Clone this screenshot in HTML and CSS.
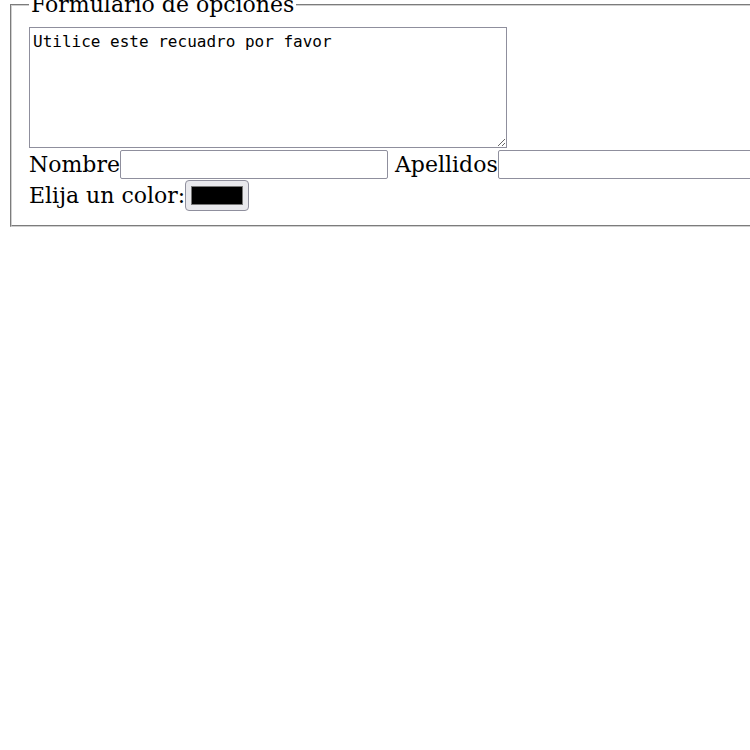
FILE: index.html
```html
<!DOCTYPE html>
<html lang="es">
<head>
<meta charset="utf-8">
<title>Formulario</title>
<link rel="stylesheet" href="styles.css">
</head>
<body>
<form class="form">
  <fieldset class="options">
    <legend class="options-legend">Formulario de opciones</legend>
    <textarea class="note">Utilice este recuadro por favor</textarea>
    <div class="row">
      <label class="lbl" for="nombre">Nombre</label><input class="text-in name-in" id="nombre" type="text"><label class="lbl gap" for="apellidos">Apellidos</label><input class="text-in last-in" id="apellidos" type="text">
    </div>
    <div class="row">
      <label class="lbl" for="color">Elija un color:</label><input class="color-in" id="color" type="color" value="#000000">
    </div>
  </fieldset>
</form>
</body>
</html>
```
FILE: styles.css
```css
html, body {
  margin: 0;
  padding: 0;
  background: #ffffff;
  overflow: hidden;
}
body {
  font-family: "DejaVu Serif", serif;
  font-size: 22px;
  color: #000;
}
.form {
  margin: 0;
}
.options {
  width: 780px;
  margin: -8px 0 0 10px;
  padding: 10px 17px 14px 17px;
  border: 2px groove #d0d0d0;
  min-width: 0;
}
.options-legend {
  font-size: 22px;
  padding: 0 2px;
  line-height: 25px;
}
.note {
  display: block;
  box-sizing: border-box;
  width: 478px;
  height: 121px;
  margin: 0;
  padding: 4px 3px 2px 3px;
  font-family: "DejaVu Sans Mono", monospace;
  font-size: 16px;
  line-height: 19px;
  border: 1px solid #8f8f9d;
  border-radius: 0;
  resize: both;
}
.row {
  display: flex;
  align-items: center;
  white-space: nowrap;
}
.note + .row {
  margin-top: 2px;
}
.row + .row {
  margin-top: 1px;
}
.lbl {
  line-height: 29px;
}
.gap {
  margin-left: 7px;
}
.text-in {
  box-sizing: border-box;
  height: 29px;
  margin: 0;
  padding: 1px 2px;
  border: 1px solid #8f8f9d;
  border-radius: 2px;
  font-family: "DejaVu Sans", sans-serif;
  font-size: 16px;
  flex: none;
}
.name-in {
  width: 268px;
}
.last-in {
  width: 268px;
}
.color-in {
  box-sizing: border-box;
  width: 64px;
  height: 31px;
  margin: 0;
  padding: 5px;
  border: 1px solid #8f8f9d;
  border-radius: 4px;
  background: #e9e9ed;
  flex: none;
}
.color-in::-webkit-color-swatch-wrapper {
  padding: 0;
}
.color-in::-webkit-color-swatch {
  border: 1px solid #777777;
  border-radius: 0;
}
```
